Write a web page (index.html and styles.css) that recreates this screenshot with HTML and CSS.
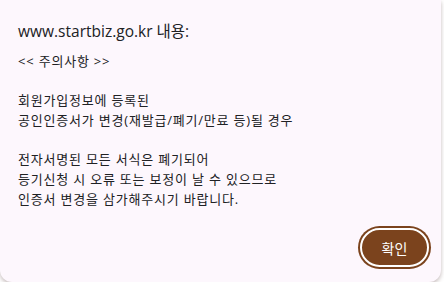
FILE: index.html
```html
<!DOCTYPE html>
<html lang="ko">

<head>
    <meta charset="UTF-8">
    <title>알림</title>
    <link rel="stylesheet" href="styles.css">
</head>

<body>
    <div class="dialogo">
        <div class="titulo">www.startbiz.go.kr 내용:</div>
        <div class="mensaje">
            <p class="aviso">&lt;&lt; 주의사항 &gt;&gt;</p>
            <p>회원가입정보에 등록된<br>공인인증서가 변경(재발급/폐기/만료 등)될 경우</p>
            <p>전자서명된 모든 서식은 폐기되어<br>등기신청 시 오류 또는 보정이 날 수 있으므로<br>인증서 변경을 삼가해주시기 바랍니다.</p>
        </div>
        <div class="botones">
            <button class="aceptar">확인</button>
        </div>
    </div>
</body>

</html>
```

FILE: styles.css
```css
body {
    margin: 0;
    background-color: #ffffff;
    font-family: "Open Sans", "Noto Sans CJK KR", sans-serif;
    color: #202124;
}

.dialogo {
    width: 441px;
    height: 282px;
    box-sizing: border-box;
    padding: 20px 12px 0 18px;
    background-color: #fdf7fd;
    border-radius: 0 0 12px 12px;
    box-shadow: 0 2px 4px rgba(90, 60, 60, 0.35);
    display: flex;
    flex-direction: column;
}

.titulo {
    font-size: 15.5px;
    line-height: 22px;
}

.mensaje {
    font-size: 13px;
    line-height: 20px;
    letter-spacing: 0.8px;
}

.mensaje p {
    margin: 0 0 19px 0;
}

.aviso {
    margin-top: 9px !important;
}

.botones {
    display: flex;
    justify-content: flex-end;
    margin-top: auto;
    padding-bottom: 19px;
}

.aceptar {
    width: 69px;
    height: 39px;
    border: 2px solid #ffffff;
    border-radius: 20px;
    box-shadow: 0 0 0 2px #7b431d;
    background-color: #7b431d;
    color: #ffffff;
    font-family: "Noto Sans CJK KR", sans-serif;
    font-size: 14px;
}
```
